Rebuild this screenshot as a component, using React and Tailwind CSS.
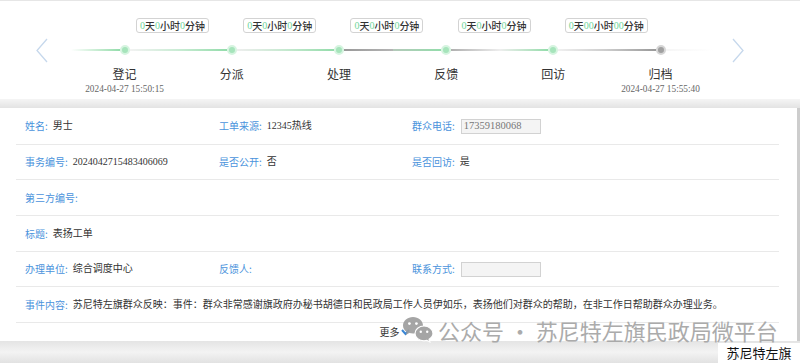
const steps = [
  { name: '登记', time: '2024-04-27 15:50:15', tag: ['0', '0', '0'], left: 'from-white to-[#93dcab]', right: 'from-[#f2f2f2] to-[#c9ecd4]' },
  { name: '分派', time: '', tag: ['0', '0', '0'], left: 'from-[#c9ecd4] to-[#93dcab]', right: 'from-[#eeeeee] to-[#c6e9d0]' },
  { name: '处理', time: '', tag: ['0', '0', '0'], left: 'from-[#c6e9d0] to-[#93dcab]', right: 'from-[#9a9a9a] to-[#b4b4b4]' },
  { name: '反馈', time: '', tag: ['0', '0', '0'], left: 'from-[#b4c9ba] to-[#93dcab]', right: 'from-[#b0b0b0] to-[#eeeeee]' },
  { name: '回访', time: '', tag: ['0', '00', '00'], left: 'from-[#eeeeee] to-[#93dcab]', right: 'from-[#f0f0f0] to-[#cccccc]' },
  { name: '归档', time: '2024-04-27 15:55:40', tag: null, left: 'from-[#cccccc] to-[#999999]', right: 'from-[#f6f6f6] to-white', gray: true },
];

function Num({ children }) {
  return <span className="text-[#6fd59a] font-['Liberation_Serif',serif] font-normal">{children}</span>;
}

function Tag({ t }) {
  return (
    <div className="absolute top-[17px] left-[65px] flex items-center h-[15px] px-[3px] border border-[#d3d3d3] rounded-[3px] bg-white text-[10px] leading-none whitespace-nowrap text-[#333] font-medium">
      <Num>{t[0]}</Num>天<Num>{t[1]}</Num>小时<Num>{t[2]}</Num>分钟
    </div>
  );
}

function Step({ s }) {
  return (
    <div className="relative w-[107.2px] flex flex-col items-center pt-[44px]">
      {s.tag && <Tag t={s.tag} />}
      <div className="w-full h-[10px] flex items-center">
        <div className={`flex-1 h-[2px] bg-linear-to-r ${s.left}`} />
        <div
          className={
            s.gray
              ? 'w-[10px] h-[10px] rounded-full bg-[#a0a0a0] border-2 border-[#d6d6d6] shrink-0'
              : 'w-[10px] h-[10px] rounded-full bg-[#a6e4bb] border-2 border-[#d6f4e0] shrink-0'
          }
        />
        <div className={`flex-1 h-[2px] bg-linear-to-r ${s.right}`} />
      </div>
      <div className="mt-[10px] text-[12px] leading-[18px] text-[#333]">{s.name}</div>
      {s.time && (
        <div className="-mt-[1px] whitespace-nowrap text-[9.3px] leading-[14px] text-[#666] font-['Liberation_Serif',serif]">
          {s.time}
        </div>
      )}
    </div>
  );
}

function Field({ label, children, w }) {
  return (
    <div className={`flex items-center ${w}`}>
      <span className="text-[#4a93dc]">{label}:</span>
      <span className="ml-[5px] text-[#333] font-['Liberation_Serif','Noto_Sans_CJK_SC',serif]">{children}</span>
    </div>
  );
}

function Box({ value }) {
  return (
    <div className="ml-[6px] w-[80px] h-[15px] border border-[#d2d2d2] bg-[#f4f4f4] pl-[2px] flex items-center text-[10.5px] text-[#777] font-['Liberation_Serif',serif]">
      {value}
    </div>
  );
}

function Row({ h, children }) {
  return <div className={`flex items-center ${h} pl-[9px] border-b border-[#e9e9e9]`}>{children}</div>;
}

function WeChat() {
  return (
    <svg width="32" height="27" viewBox="0 0 32 27">
      <path d="M11 1C5.5 1 1 4.8 1 9.4c0 2.6 1.4 4.9 3.7 6.4L3.8 19l3.4-1.9c1.2.3 2.5.5 3.8.5 5.5 0 10-3.8 10-8.2S16.5 1 11 1z" fill="#9c9c9c" />
      <circle cx="7.4" cy="7.6" r="1.4" fill="#fff" />
      <circle cx="14.4" cy="7.6" r="1.4" fill="#fff" />
      <path d="M22 10c-5 0-9 3.3-9 7.4s4 7.4 9 7.4c1 0 2-.1 2.9-.4l3 1.6-.8-2.8c2.2-1.4 3.9-3.5 3.9-5.8 0-4.1-4-7.4-9-7.4z" fill="#9c9c9c" stroke="#fff" strokeWidth="1.2" />
      <circle cx="18.8" cy="15.8" r="1.2" fill="#fff" />
      <circle cx="25.2" cy="15.8" r="1.2" fill="#fff" />
    </svg>
  );
}

export default function App() {
  return (
    <div className="relative w-[800px] h-[363px] overflow-hidden bg-white font-['Noto_Sans_CJK_SC',sans-serif]">
      {/* timeline */}
      <div className="h-[99px] border-t border-[#e6e6e6] flex">
        <div className="w-[71px] pl-[36px] pt-[37px]">
          <svg width="12" height="25" viewBox="0 0 12 25">
            <polyline points="11,1 1,12.5 11,24" fill="none" stroke="#c6d8ec" strokeWidth="1.3" />
          </svg>
        </div>
        {steps.map((s) => (
          <Step key={s.name} s={s} />
        ))}
        <div className="pl-[18px] pt-[37px]">
          <svg width="12" height="25" viewBox="0 0 12 25">
            <polyline points="1,1 11,12.5 1,24" fill="none" stroke="#c6d8ec" strokeWidth="1.3" />
          </svg>
        </div>
      </div>

      <div className="h-[9px] bg-linear-to-b from-[#f5f5f5] to-[#e3e3e3]" />

      {/* detail card */}
      <div className="flex h-[233px]">
        <div className="ml-[16px] w-[763px] text-[10px] leading-none">
          <Row h="h-[37px]">
            <Field label="姓名" w="w-[194px]">男士</Field>
            <Field label="工单来源" w="w-[193px]">12345热线</Field>
            <div className="flex items-center">
              <span className="text-[#4a93dc]">群众电话:</span>
              <Box value="17359180068" />
            </div>
          </Row>
          <Row h="h-[35px]">
            <Field label="事务编号" w="w-[194px]">2024042715483406069</Field>
            <Field label="是否公开" w="w-[193px]">否</Field>
            <Field label="是否回访">是</Field>
          </Row>
          <Row h="h-[36px]">
            <Field label="第三方编号" />
          </Row>
          <Row h="h-[36px]">
            <Field label="标题">表扬工单</Field>
          </Row>
          <Row h="h-[35px]">
            <Field label="办理单位" w="w-[194px]">综合调度中心</Field>
            <Field label="反馈人" w="w-[193px]" />
            <div className="flex items-center">
              <span className="text-[#4a93dc]">联系方式:</span>
              <Box value="" />
            </div>
          </Row>
          <Row h="h-[36px]">
            <Field label="事件内容">
              苏尼特左旗群众反映：事件：群众非常感谢旗政府办秘书胡德日和民政局工作人员伊如乐，表扬他们对群众的帮助，在非工作日帮助群众办理业务。
            </Field>
          </Row>
          <div className="h-[18px] flex items-center justify-center pr-[6px]">
            <span className="text-[#333]">更多</span>
            <svg width="9" height="7" viewBox="0 0 9 7" className="ml-[1px]">
              <polyline points="1,1 4.5,5 8,1" fill="none" stroke="#3a86d4" strokeWidth="2" />
            </svg>
          </div>
        </div>
        <div className="flex-1" />
        <div className="w-[3px] bg-[#cdcdcd]" />
      </div>

      {/* bottom band */}
      <div className="h-[22px] flex bg-linear-to-b from-[#e4e4e4] via-[#f3f3f3] to-[#e2e2e2]">
        <div className="flex-1" />
        <div className="w-[82px] mt-[2px] bg-white flex items-center justify-center text-[13px] text-[#111]">苏尼特左旗</div>
      </div>

      {/* watermark */}
      <div className="absolute left-[402px] top-[316px] flex items-center gap-[4px] opacity-90">
        <WeChat />
        <span className="text-[22px] leading-none text-[#a3a3a3] whitespace-nowrap">公众号 · 苏尼特左旗民政局微平台</span>
      </div>
    </div>
  );
}
